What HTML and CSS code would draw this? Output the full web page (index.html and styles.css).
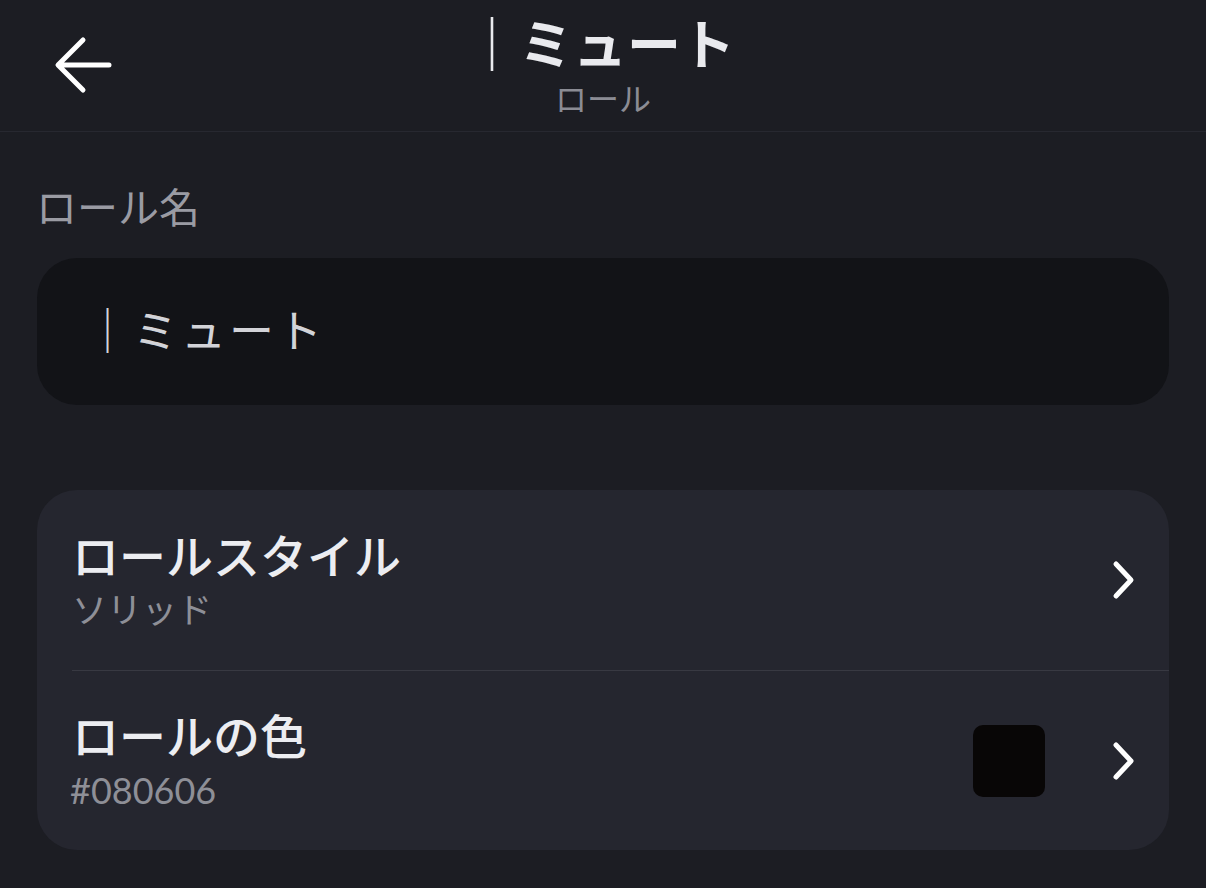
FILE: index.html
```html
<!DOCTYPE html>
<html lang="ja">
<head>
<meta charset="utf-8">
<link rel="stylesheet" href="styles.css">
</head>
<body>
<header class="top">
  <button class="back" aria-label="戻る">
    <svg width="60" height="60" viewBox="0 0 60 60"><path d="M56 29H6M30 4L5 29L30 54" fill="none" stroke="#fff" stroke-width="5" stroke-linecap="round" stroke-linejoin="round"/></svg>
  </button>
  <div class="titles">
    <div class="title">｜ミュート</div>
    <div class="subtitle">ロール</div>
  </div>
</header>
<main class="content">
  <div class="label">ロール名</div>
  <div class="input">｜ミュート</div>
  <div class="card">
    <div class="row">
      <div class="texts">
        <div class="row-title">ロールスタイル</div>
        <div class="row-sub">ソリッド</div>
      </div>
      <svg class="chev" width="26" height="40" viewBox="0 0 26 40"><path d="M5 4L20 20L5 36" fill="none" stroke="#fff" stroke-width="5" stroke-linecap="round" stroke-linejoin="round"/></svg>
    </div>
    <div class="row">
      <div class="texts">
        <div class="row-title">ロールの色</div>
        <div class="row-sub latin">#080606</div>
      </div>
      <div class="swatch"></div>
      <svg class="chev" width="26" height="40" viewBox="0 0 26 40"><path d="M5 4L20 20L5 36" fill="none" stroke="#fff" stroke-width="5" stroke-linecap="round" stroke-linejoin="round"/></svg>
    </div>
  </div>
</main>
</body>
</html>
```
FILE: styles.css
```css
* { box-sizing: border-box; }
html, body {
  margin: 0;
  background: #1c1d23;
  color: #e8e9ee;
  font-family: "Noto Sans CJK JP", "Noto Sans", sans-serif;
}
.top {
  height: 132px;
  border-bottom: 1px solid #272830;
  display: flex;
  align-items: center;
  justify-content: center;
  position: relative;
}
.back {
  position: absolute;
  left: 53px;
  top: 36px;
  background: none;
  border: 0;
  padding: 0;
  width: 60px;
  height: 60px;
}
.back svg { display: block; }
.titles {
  display: flex;
  flex-direction: column;
  align-items: center;
  margin-top: -1px;
}
.title {
  font-size: 54px;
  font-weight: 700;
  line-height: 56px;
  color: #e9eaee;
  margin-left: -6px;
}
.subtitle {
  font-size: 32px;
  line-height: 40px;
  color: #8b8c94;
  margin-top: 7px;
}
.content {
  padding: 0 37px;
}
.label {
  font-size: 41px;
  line-height: 48px;
  color: #9a9ba3;
  margin-top: 49px;
  margin-left: -1px;
}
.input {
  margin-top: 29px;
  height: 147px;
  border-radius: 40px;
  background: #121317;
  display: flex;
  align-items: center;
  padding-left: 48px;
  padding-bottom: 6px;
  font-size: 45px;
  color: #d2d3d8;
  letter-spacing: 3px;
}
.card {
  margin-top: 85px;
  background: #25262f;
  border-radius: 40px;
  overflow: hidden;
}
.row {
  height: 180px;
  display: flex;
  align-items: center;
  padding: 0 32px 0 35px;
}
.row + .row {
  border-top: 1px solid #383942;
  margin-left: 35px;
  padding-left: 0;
}
.texts {
  flex: 1;
  display: flex;
  flex-direction: column;
  margin-top: -4px;
}
.row-title {
  font-size: 47px;
  line-height: 52px;
  font-weight: 500;
  color: #ecedf1;
}
.row-sub {
  font-size: 35px;
  line-height: 40px;
  color: #8e8f97;
  margin-top: 8px;
}
.row-sub.latin {
  font-family: "Lato", "Noto Sans", sans-serif;
  font-size: 36px;
  margin-left: -2px;
  margin-top: 10px;
}
.swatch {
  width: 72px;
  height: 72px;
  border-radius: 10px;
  background: #080606;
  margin-right: 66px;
}
.chev { display: block; flex: none; }
```
